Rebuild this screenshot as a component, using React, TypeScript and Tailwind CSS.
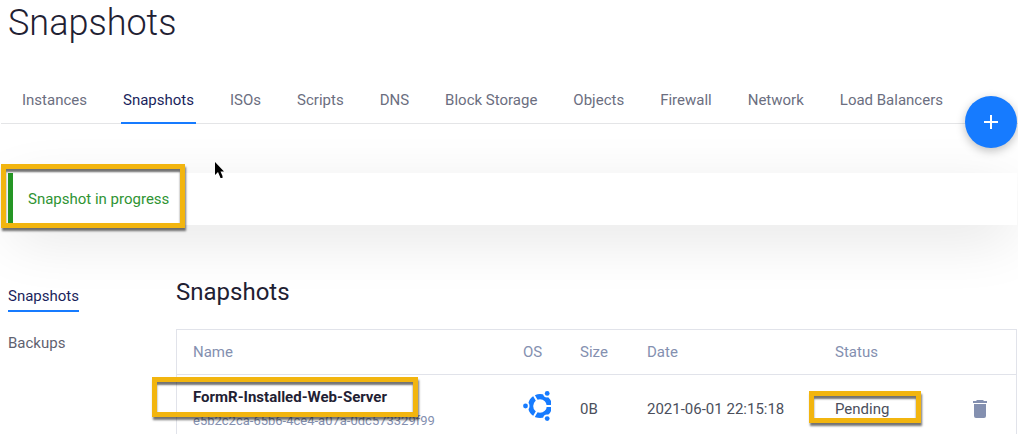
import React from "react";

const tabs = ["Instances", "Snapshots", "ISOs", "Scripts", "DNS", "Block Storage", "Objects", "Firewall", "Network", "Load Balancers"];

const marker =
  "pointer-events-none absolute border-[5px] border-[#f2b50f] shadow-[1px_3px_2px_rgba(0,0,0,0.55),inset_0_3px_2px_rgba(0,0,0,0.55)]";

function UbuntuIcon() {
  return (
    <svg className="mb-1.5 block" width="28" height="32" viewBox="0 0 28 32" role="img" aria-label="Ubuntu">
      <circle cx="17" cy="16" r="9.4" fill="none" stroke="#167bff" strokeWidth="5.2" />
      <path d="M17 16H30M17 16L10.5 4.7M17 16L10.5 27.3" stroke="#fff" strokeWidth="2" />
      <g fill="#fff">
        <circle cx="2.5" cy="16" r="4" />
        <circle cx="24.2" cy="3.4" r="4" />
        <circle cx="24.2" cy="28.6" r="4" />
      </g>
      <g fill="#167bff">
        <circle cx="2.5" cy="16" r="2.4" />
        <circle cx="24.2" cy="3.4" r="2.4" />
        <circle cx="24.2" cy="28.6" r="2.4" />
      </g>
    </svg>
  );
}

export default function App() {
  return (
    <div className="h-screen overflow-hidden bg-white font-['Roboto',sans-serif] text-[15px] leading-5 text-[#4b4f5c]">
      <h1 className="pt-px pl-2 text-[36px] leading-[44px] font-light text-[#1f2133]">Snapshots</h1>

      <div className="relative mt-[31px] ml-px">
        <nav className="flex gap-8 border-b border-[#e4e5e7] pl-[19px]" aria-label="Products">
          {tabs.map((t) => (
            <a
              key={t}
              href="#"
              aria-current={t === "Snapshots" ? "page" : undefined}
              className={
                "-mb-px border-b-2 px-0.5 pt-[14px] pb-3 whitespace-nowrap " +
                (t === "Snapshots" ? "border-[#167bff] text-[#1a1f5c]" : "border-transparent text-[#6b6e80]")
              }
            >
              {t}
            </a>
          ))}
        </nav>
        <button
          aria-label="Add snapshot"
          className="absolute right-px -bottom-6 z-10 flex size-[52px] items-center justify-center rounded-full bg-[#167bff] shadow-[0_3px_10px_rgba(0,0,0,0.25)]"
        >
          <svg width="16" height="16" viewBox="0 0 16 16" aria-hidden="true">
            <path d="M8 1V15M1 8H15" stroke="#fff" strokeWidth="2" />
          </svg>
        </button>
      </div>

      <div className="relative mt-[49px] mr-px ml-2">
        <div role="status" className="border-l-[5px] border-[#259625] bg-white py-4 pl-[15px] text-[#2f9433] shadow-[0_15px_60px_-4px_rgba(0,0,0,0.12)]">
          Snapshot in progress
        </div>
        <div className={marker + " -top-[9px] -left-[7px] h-16 w-[184px]"} />
        <svg className="absolute -top-3 left-[206px]" width="12" height="19" viewBox="0 0 12 19" aria-hidden="true">
          <path d="M1 1V14L4 11L6.5 17H8.5V15L6.5 10.5H10Z" fill="#000" />
        </svg>
      </div>

      <div className="mt-[53px] mr-px ml-2 flex">
        <nav className="flex w-[168px] flex-col items-start gap-[21px] pt-2" aria-label="Snapshot type">
          <a href="#" aria-current="page" className="border-b-2 border-[#167bff] pb-1 text-[#1a1f5c]">Snapshots</a>
          <a href="#" className="text-[#5f6270]">Backups</a>
        </nav>
        <main className="min-w-0 flex-1">
          <h2 className="text-2xl leading-7 text-[#1f2133]">Snapshots</h2>
          <div className="mt-[23px] border border-[#e1e3ea]">
            <table className="w-full table-fixed text-left">
              <colgroup>
                <col className="w-[346px]" />
                <col className="w-[57px]" />
                <col className="w-[67px]" />
                <col className="w-[188px]" />
                <col className="w-[137px]" />
                <col />
              </colgroup>
              <thead>
                <tr className="h-[44px] border-b border-[#e1e3ea] text-[#8490b0]">
                  <th className="pl-4 font-normal">Name</th>
                  <th className="font-normal">OS</th>
                  <th className="font-normal">Size</th>
                  <th className="font-normal">Date</th>
                  <th className="font-normal">Status</th>
                  <th aria-label="Actions" />
                </tr>
              </thead>
              <tbody>
                <tr className="h-[70px]">
                  <td className="relative pl-4 whitespace-nowrap">
                    <div className="leading-6 font-bold text-[#1f2133]">FormR-Installed-Web-Server</div>
                    <div className="text-[13px] leading-6 text-[#8490b0]">e5b2c2ca-65b6-4ce4-a07a-0dc573329f99</div>
                    <div className={marker + " top-0.5 -left-[25px] h-10 w-[266px]"} />
                  </td>
                  <td><UbuntuIcon /></td>
                  <td>0B</td>
                  <td>2021-06-01 22:15:18</td>
                  <td className="relative">
                    Pending
                    <div className={marker + " top-4 -left-[26px] h-8 w-28"} />
                  </td>
                  <td>
                    <button aria-label="Delete snapshot" className="block">
                      <svg width="16" height="18" viewBox="0 0 16 18" fill="#8490b0" aria-hidden="true">
                        <path d="M5 0H11L12 1H15V3H1V1H4ZM2 4H14V16Q14 18 12 18H4Q2 18 2 16Z" />
                      </svg>
                    </button>
                  </td>
                </tr>
              </tbody>
            </table>
          </div>
        </main>
      </div>
    </div>
  );
}
